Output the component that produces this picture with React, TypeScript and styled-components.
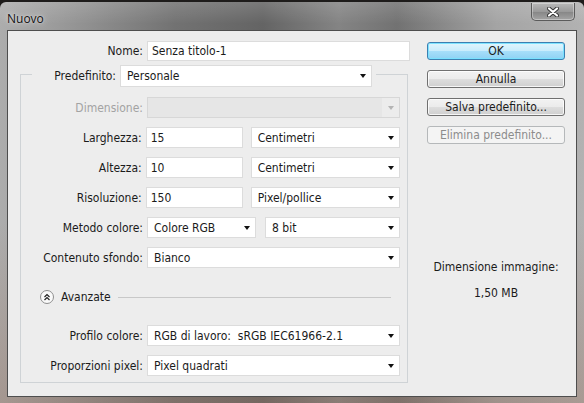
import styled, { createGlobalStyle } from "styled-components"

const Global = createGlobalStyle`
    html, body {
        margin: 0;
        padding: 0;
    }
    body {
        width: 584px;
        height: 403px;
        overflow: hidden;
        background: #1e1c1b;
        font-family: "DejaVu Sans Condensed", "DejaVu Sans", sans-serif;
        font-stretch: condensed;
        font-size: 12px;
        color: #1b1b1b;
    }
`

const Window = styled.div`
    width: 584px;
    height: 401px;
    margin-top: 2px;
    border-radius: 6px 6px 0 0;
    display: flex;
    flex-direction: column;
    background:
        linear-gradient(180deg, rgba(255, 255, 255, 0.14) 0px, rgba(255, 255, 255, 0) 22px),
        linear-gradient(180deg, rgba(0, 0, 0, 0) 0%, rgba(0, 0, 0, 0) 55%, rgba(150, 110, 90, 0.35) 100%),
        linear-gradient(90deg, #adadad 0%, #9a9a9a 10%, #727272 30%, #646464 45%, #848484 58%, #727272 68%, #a4a4a4 85%, #b2b2b2 100%);
`

const TitleBar = styled.div`
    height: 28px;
    display: flex;
    align-items: flex-start;
    justify-content: space-between;
    padding: 0 9px 0 7px;
`

const Title = styled.div`
    margin-top: 8px;
    font-family: "Open Sans", "DejaVu Sans", sans-serif;
    font-stretch: normal;
    font-size: 12px;
    color: #111;
    text-shadow: 0 0 6px rgba(255, 255, 255, 0.7), 0 0 2px rgba(255, 255, 255, 0.6);
`

const CloseButton = styled.div`
    width: 44px;
    height: 18px;
    box-sizing: border-box;
    margin-top: 1px;
    border: 1px solid #5b5b5b;
    border-top: none;
    border-radius: 0 0 5px 5px;
    box-shadow: inset 0 0 0 1px rgba(255, 255, 255, 0.35);
    background: linear-gradient(180deg, #b9b9b9 0%, #9a9a9a 50%, #858585 51%, #a4a4a4 100%);
    display: flex;
    align-items: center;
    justify-content: center;
`

const Body = styled.div`
    margin: 0 7px;
    height: 367px;
    box-sizing: border-box;
    border: 1px solid #4e4e4e;
    background: #ededed;
    display: flex;
`

const FormColumn = styled.div`
    width: 407px;
    padding-top: 10px;
    display: flex;
    flex-direction: column;
`

const Row = styled.div`
    display: flex;
    align-items: center;
    gap: 4px;
`

const Spacer = styled.span<{ $width: number }>`
    width: ${p => p.$width}px;
`

const Label = styled.div<{ $width: number; $disabled?: boolean }>`
    width: ${p => p.$width}px;
    text-align: right;
    white-space: nowrap;
    color: ${p => (p.$disabled ? "#a3a3a3" : "#1b1b1b")};
`

const TextInput = styled.input<{ $width: number; $height?: number }>`
    width: ${p => p.$width}px;
    height: ${p => p.$height ?? 21}px;
    box-sizing: border-box;
    margin: 0;
    padding: 0 4px;
    border: 1px solid #dcdcdc;
    background: #fff;
    font: inherit;
    color: #1b1b1b;
    outline: none;
`

const Dropdown = styled.div<{ $width: number; $height?: number; $disabled?: boolean }>`
    width: ${p => p.$width}px;
    height: ${p => p.$height ?? 21}px;
    box-sizing: border-box;
    border: 1px solid ${p => (p.$disabled ? "#d7d7d7" : "#dcdcdc")};
    background: ${p => (p.$disabled ? "#e6e6e6" : "#fff")};
    display: flex;
    align-items: center;
    padding-left: 6px;
    white-space: pre;

    .value {
        flex: 1;
        overflow: hidden;
    }
    .arrow {
        width: 17px;
        height: 100%;
        display: flex;
        align-items: center;
        justify-content: center;
        background: ${p => (p.$disabled ? "#ececec" : "transparent")};
    }
    .arrow::after {
        content: "";
        border-left: 3.5px solid transparent;
        border-right: 3.5px solid transparent;
        border-top: 4px solid ${p => (p.$disabled ? "#b4b4b4" : "#111")};
    }
`

const Group = styled.fieldset`
    margin: 0 0 0 12px;
    width: 388px;
    box-sizing: border-box;
    border: 1px solid #cfd3d6;
    padding: 0 7px 6px 11px;
    min-width: 0;
`

const Legend = styled.legend`
    padding: 4px 4px 0 0;
    display: flex;
    align-items: center;
    gap: 4px;
`

const GroupRows = styled.div<{ $top: number }>`
    display: flex;
    flex-direction: column;
    gap: 9px;
    margin-top: ${p => p.$top}px;
`

const AdvancedRow = styled.div`
    display: flex;
    align-items: center;
    height: 14px;
    margin: 22px 0 21px 8px;

    .label {
        margin-left: 7px;
    }
    .rule {
        flex: 1;
        height: 1px;
        background: #c8c8c8;
        margin: 1px 9px 0 7px;
    }
`

const SideColumn = styled.div`
    margin-left: 12px;
    width: 138px;
    padding-top: 11px;
    display: flex;
    flex-direction: column;
    gap: 10px;
`

const Button = styled.div<{ $primary?: boolean; $disabled?: boolean }>`
    height: 18px;
    box-sizing: border-box;
    border-radius: 3px;
    display: flex;
    align-items: center;
    justify-content: center;
    border: 1px solid ${p => (p.$primary ? "#3c7fb1" : p.$disabled ? "#b5b8ba" : "#707070")};
    color: ${p => (p.$disabled ? "#8c8c8c" : "#1b1b1b")};
    background: ${p =>
        p.$primary
            ? "linear-gradient(180deg, #e2f5fd 0%, #c8ecfc 50%, #a6defa 52%, #8fd2f3 100%)"
            : p.$disabled
            ? "#f4f4f4"
            : "linear-gradient(180deg, #f2f2f2 0%, #ebebeb 50%, #dddddd 52%, #cfcfcf 100%)"};
    box-shadow: ${p =>
        p.$primary
            ? "inset 0 0 0 1px rgba(120, 225, 255, 0.95)"
            : p.$disabled
            ? "none"
            : "inset 0 0 0 1px rgba(255, 255, 255, 0.8)"};
`

const ImageInfo = styled.div`
    margin-top: 106px;
    text-align: center;
    line-height: 14px;

    .size {
        margin-top: 12px;
    }
`

const CloseGlyph = () => (
    <svg width="12" height="10" viewBox="0 0 12 10">
        <path d="M2 1.5 L10 8.5 M10 1.5 L2 8.5" stroke="#333" strokeWidth="4" strokeLinecap="round" />
        <path d="M2 1.5 L10 8.5 M10 1.5 L2 8.5" stroke="#fff" strokeWidth="2.2" strokeLinecap="round" />
    </svg>
)

const CollapseIcon = () => (
    <svg width="14" height="14" viewBox="0 0 14 14">
        <circle cx="7" cy="7" r="6.5" fill="#fafafa" stroke="#8e8e8e" />
        <path d="M4.5 7 L7 4.5 L9.5 7 M4.5 10 L7 7.5 L9.5 10" fill="none" stroke="#222" strokeWidth="1.2" />
    </svg>
)

interface SelectProps {
    value?: string
    width: number
    height?: number
    disabled?: boolean
}

const Select = ({ value = "", width, height, disabled }: SelectProps) => (
    <Dropdown $width={width} $height={height} $disabled={disabled}>
        <span className="value">{value}</span>
        <span className="arrow" />
    </Dropdown>
)

const App = () => {
    return (
        <>
            <Global />
            <Window>
                <TitleBar>
                    <Title>Nuovo</Title>
                    <CloseButton>
                        <CloseGlyph />
                    </CloseButton>
                </TitleBar>
                <Body>
                    <FormColumn>
                        <Row>
                            <Label $width={135}>Nome:</Label>
                            <TextInput $width={263} $height={20} readOnly value="Senza titolo-1" />
                        </Row>
                        <Group>
                            <Legend>
                                <Label $width={84}>Predefinito:</Label>
                                <Select value="Personale" width={252} height={22} />
                            </Legend>
                            <GroupRows $top={10}>
                                <Row>
                                    <Label $width={111} $disabled>Dimensione:</Label>
                                    <Select width={253} disabled />
                                </Row>
                                <Row>
                                    <Label $width={111}>Larghezza:</Label>
                                    <TextInput $width={97} readOnly value="15" />
                                    <Spacer $width={0} />
                                    <Select value="Centimetri" width={151} />
                                </Row>
                                <Row>
                                    <Label $width={111}>Altezza:</Label>
                                    <TextInput $width={97} readOnly value="10" />
                                    <Spacer $width={0} />
                                    <Select value="Centimetri" width={151} />
                                </Row>
                                <Row>
                                    <Label $width={111}>Risoluzione:</Label>
                                    <TextInput $width={97} readOnly value="150" />
                                    <Spacer $width={0} />
                                    <Select value="Pixel/pollice" width={151} />
                                </Row>
                                <Row>
                                    <Label $width={111}>Metodo colore:</Label>
                                    <Select value="Colore RGB" width={109} />
                                    <Spacer $width={1} />
                                    <Select value="8 bit" width={135} />
                                </Row>
                                <Row>
                                    <Label $width={111}>Contenuto sfondo:</Label>
                                    <Select value="Bianco" width={253} />
                                </Row>
                            </GroupRows>
                            <AdvancedRow>
                                <CollapseIcon />
                                <span className="label">Avanzate</span>
                                <span className="rule" />
                            </AdvancedRow>
                            <GroupRows $top={0}>
                                <Row>
                                    <Label $width={111}>Profilo colore:</Label>
                                    <Select value="RGB di lavoro:  sRGB IEC61966-2.1" width={253} />
                                </Row>
                                <Row>
                                    <Label $width={111}>Proporzioni pixel:</Label>
                                    <Select value="Pixel quadrati" width={253} />
                                </Row>
                            </GroupRows>
                        </Group>
                    </FormColumn>
                    <SideColumn>
                        <Button $primary>OK</Button>
                        <Button>Annulla</Button>
                        <Button>Salva predefinito...</Button>
                        <Button $disabled>Elimina predefinito...</Button>
                        <ImageInfo>
                            <div>Dimensione immagine:</div>
                            <div className="size">1,50 MB</div>
                        </ImageInfo>
                    </SideColumn>
                </Body>
            </Window>
        </>
    )
}

export default App
